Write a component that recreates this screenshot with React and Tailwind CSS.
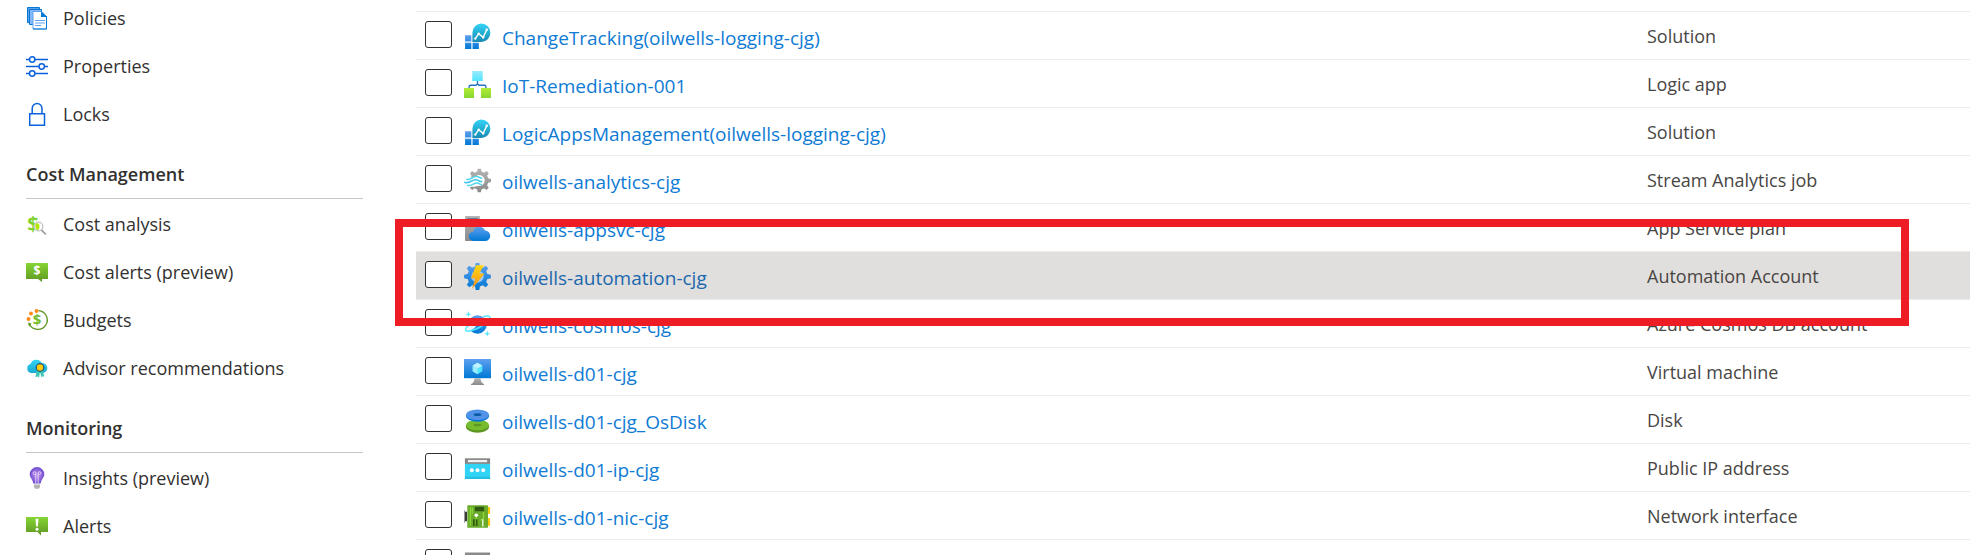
import React from "react";

function gear(cx, cy, outer, inner, teeth) {
  const step = (Math.PI * 2) / teeth;
  const pt = (r, a) => `${(cx + r * Math.sin(a)).toFixed(2)} ${(cy - r * Math.cos(a)).toFixed(2)}`;
  let d = "";
  for (let i = 0; i < teeth; i++) {
    const a = i * step;
    d += `${i ? "L" : "M"}${pt(inner, a - step * 0.3)}L${pt(outer, a - step * 0.17)}L${pt(outer, a + step * 0.17)}L${pt(inner, a + step * 0.3)}`;
  }
  return d + "Z";
}

function Gradients() {
  const list = [
    ["blue", "#5ea0ef", "#0078d4"],
    ["cyan", "#32d4f5", "#198ab3"],
    ["lime", "#b4ec36", "#86d633"],
    ["green", "#86d633", "#5e9624"],
    ["sky", "#9cebff", "#50e6ff"],
    ["grey", "#b3b3b3", "#8a8a8a"],
    ["bolt", "#ffd70f", "#f78d1e"],
    ["advisor", "#32d4f5", "#1ba9cf"],
  ];
  return (
    <svg className="h-0 w-0 shrink-0" aria-hidden="true">
      <defs>
        {list.map(([id, a, b]) => (
          <linearGradient key={id} id={id} x1="0" y1="0" x2="0" y2="1">
            <stop offset="0" stopColor={a} />
            <stop offset="1" stopColor={b} />
          </linearGradient>
        ))}
        <radialGradient id="bulb">
          <stop offset="0" stopColor="#c69aeb" />
          <stop offset="1" stopColor="#6f4bd2" />
        </radialGradient>
      </defs>
    </svg>
  );
}

const Dollar = ({ x, y, size, fill }) => (
  <text x={x} y={y} fontSize={size} fill={fill} textAnchor="middle" fontWeight="700" fontFamily="Open Sans, sans-serif">$</text>
);

/* Sidebar drawings, 22 x 22 grid */
const menuIcons = {
  policies: (
    <>
      <path d="M1.5.5h12v15h-12z" fill="#5ea0ef" stroke="#0078d4" />
      <path d="M3.5 2.5h12v15h-12z" fill="#83b9f9" stroke="#0078d4" />
      <path d="M7 4.5h9l4.500 5v12.500H7z" fill="#fff" stroke="#5ea0ef" />
      <path d="M15 4.200 21 10h-6z" fill="#0078d4" />
      <path d="M20.500 9v13H7" fill="none" stroke="#0078d4" />
      <path d="M9 13.500h10M9 16h10M9 18.500h6" stroke="#5ea0ef" strokeWidth="1.200" />
    </>
  ),
  properties: (
    <g stroke="#0b62dc" strokeWidth="1.500" fill="#fff">
      <path d="M0 4.500h22M0 11.500h22M0 18.500h22" />
      <circle cx="6.200" cy="4.500" r="2.700" />
      <circle cx="15.700" cy="11.500" r="2.700" />
      <circle cx="6.200" cy="18.500" r="2.700" />
    </g>
  ),
  locks: (
    <g stroke="#0b62dc" strokeWidth="1.500" fill="none">
      <path d="M3.700 10.700h14.800v11.500H3.700z" fill="#fff" />
      <path d="M6.200 10.700V5.500a4.900 4.900 0 0 1 9.800 0v5.200" />
    </g>
  ),
  cost: (
    <>
      <Dollar x="7" y="18" size="20" fill="#7fd32f" />
      <circle cx="12.500" cy="13.500" r="4.300" fill="#fff" stroke="#c4c4c4" strokeWidth="1.300" />
      <path d="M9.500 10.500q4-1.500 4 3t-3 3q-2-3-1-6z" fill="#b4e60e" />
      <path d="m15.500 17 4.300 4.500" stroke="#999" strokeWidth="1.800" />
    </>
  ),
  costAlert: (
    <>
      <path d="M.5 2h21q.5 0 .5.500v15q0 .5-.5.500H16v3l-4-3H.5q-.5 0-.5-.5v-15Q0 2 .5 2z" fill="url(#green)" />
      <Dollar x="11" y="14" size="12" fill="#fff" />
    </>
  ),
  budgets: (
    <>
      <path d="M12.500 1.600a9.400 9.400 0 1 1-9 13.700" fill="none" stroke="#5e9624" strokeWidth="1.300" />
      <path d="m2 13.500 3.500 1-2.500 3.300z" fill="#5e9624" />
      <circle cx="10.500" cy="2" r="2" fill="#ff8c1a" />
      <circle cx="5" cy="4.500" r="2" fill="#ff8c1a" />
      <circle cx="2.500" cy="10" r="2" fill="#ff8c1a" />
      <Dollar x="11" y="16" size="15" fill="#76bc2d" />
    </>
  ),
  advisor: (
    <>
      <path d="M5 16a4.800 4.800 0 0 1-.3-9.300A6 6 0 0 1 15.600 6 5 5 0 0 1 17 16z" fill="url(#advisor)" />
      <path d="M10.500 13.500 9.500 20l2.500-.5 1 1.500 1-6 1.500 5.500 1-1.200 1.700.5-1.200-6z" fill="#3fc8b4" />
      <circle cx="14" cy="10.500" r="3.800" fill="#ffca00" stroke="#1c5180" strokeWidth="1.200" />
    </>
  ),
  insights: (
    <>
      <path d="M11 0a7.300 7.300 0 0 1 7.300 7.300c0 3.500-3 4.900-3.600 9.200H7.300C6.700 12.200 3.700 10.800 3.700 7.300A7.300 7.300 0 0 1 11 0z" fill="url(#bulb)" />
      <path d="M9.800 16V7.500M12.200 16V7.500M9.800 7.500H8.500A1.400 1.400 0 1 1 9.800 6zM12.200 7.500h1.300A1.400 1.400 0 1 0 12.200 6z" fill="none" stroke="#e6d3f8" strokeWidth=".9" />
      <path d="M8 17.500h6v2.500l-1.200 1.700H9.200L8 20z" fill="#b3b3b3" />
    </>
  ),
  alerts: (
    <>
      <path d="M.5 2h21q.5 0 .5.500v14q0 .5-.5.500H15v3.500L11.500 17H.5q-.5 0-.5-.5v-14Q0 2 .5 2z" fill="url(#green)" />
      <path d="M9.500 3.700h3l-.6 7.800h-1.800z" fill="#fff" />
      <circle cx="11" cy="14.200" r="1.500" fill="#fff" />
    </>
  ),
};

/* Resource drawings, 18 x 18 grid */
const resourceIcons = {
  solution: (
    <>
      <path d="M.7 8.200h4.200v4.200H.7zM.7 13.200h4.200v4.200H.7zM5.700 13.200h4.200v4.200H5.700z" fill="url(#blue)" />
      <path d="M5.600 12.600V6.500a6 6.100 0 1 1 6 6.100z" fill="url(#cyan)" />
      <path d="m7.500 10.400 2.300-3.200 3 2.400 2.400-5.200" fill="none" stroke="#fff" strokeWidth=".9" />
      <g fill="#fff"><circle cx="7.500" cy="10.400" r=".8" /><circle cx="9.800" cy="7.200" r=".8" /><circle cx="12.800" cy="9.600" r=".8" /><circle cx="15.200" cy="4.400" r=".8" /></g>
    </>
  ),
  logic: (
    <>
      <path d="M5.500 0h7v6.700h-7z" fill="url(#sky)" />
      <path d="M9 6.700v2.500M3.400 11.300v-.8q0-1 1-1H8L9 8.500l1 1h3.600q1 0 1 1v.8" fill="none" stroke="#2773c4" strokeWidth=".9" />
      <path d="M0 11.300h6.700V18H0zM11.300 11.300H18V18h-6.700z" fill="url(#lime)" />
    </>
  ),
  stream: (
    <>
      <path d={gear(10.2, 9, 7.9, 6.1, 8)} fill="url(#grey)" />
      <circle cx="10.200" cy="9" r="3.600" fill="#fff" />
      <path d="M-1 6.800h7.500L10 5.500v7L7 13.200H-1z" fill="#fff" />
      <g fill="none" strokeWidth="1"><path d="M1.500 8.200c3 1.200 4-2.400 7-1.800 2 .3 2 1.200 3.700 1" stroke="#50d8f0" /><path d="M.2 10.200c3.800 1.500 5-2.200 8-1.700 2 .3 2 1.500 4 1.200" stroke="#32c4e4" /><path d="M2 12.200c3.500 1 4.500-2 7-1.500 1.500.3 1.500 1.200 3 1" stroke="#50d8f0" /></g>
    </>
  ),
  plan: (
    <>
      <path d="M1.200.7h9q.5 0 .5.500v16.100H1.200q-.5 0-.5-.5V1.200q0-.5.5-.5z" fill="url(#grey)" />
      <path d="M2.300 2.300h6.900v1.400H2.300zM2.300 4.900h6.900v1.300H2.300z" fill="#1b4c80" />
      <path d="M6.500 17.300a3.100 3.100 0 0 1-.4-6.200A4.200 4.200 0 0 1 14 10.300a3.500 3.500 0 0 1 0 7z" fill="url(#blue)" />
    </>
  ),
  automation: (
    <>
      <path d={gear(9, 9, 9, 6.8, 8)} fill="url(#blue)" />
      <circle cx="9" cy="9" r="4.100" fill="#9fc8f5" />
      <path d="M8 1.500h5.300L10.200 7h3.500L5.300 17.400 7.500 10.300H4.600z" fill="url(#bolt)" />
    </>
  ),
  cosmos: (
    <>
      <circle cx="9" cy="9" r="6.200" fill="url(#blue)" />
      <path d="M3.500 7.500Q6 5.500 7.500 8T6 12q-2 1.500-3 .3-.8-2.600.5-4.800z" fill="#e6f2ff" />
      <path d="M12.700 3.800C16 2.800 18 3.300 17 5.200c-1.300 2.500-5.500 5.300-9.500 7-3.500 1.500-6.500 1.700-6.500.3 0-1 .8-2 2-3" fill="none" stroke="#50e6ff" strokeWidth="1" />
      <path d="m2.900 0 .5 1.600L5 2.100l-1.600.5-.5 1.600-.5-1.600L.8 2.100l1.600-.5zM15.500 13l.5 1.600 1.600.5-1.600.5-.5 1.600-.5-1.600-1.600-.5 1.600-.5z" fill="#50e6ff" />
    </>
  ),
  vm: (
    <>
      <path d="M0 0h18v12.800H0z" fill="url(#blue)" />
      <path d="m9 2.500 3.200 1.900v3.800L9 10.100 5.800 8.200V4.400z" fill="#50e6ff" />
      <path d="m9 2.500 3.200 1.900L9 6.300 5.800 4.400z" fill="#c3f1ff" />
      <path d="m5.800 4.400 3.200 1.900v3.800L5.800 8.200z" fill="#9cebff" />
      <path d="M7 12.800h4q.2 3 2.300 3.900v.6H4.700v-.6Q6.800 15.800 7 12.800z" fill="url(#grey)" />
    </>
  ),
  disk: (
    <>
      <path d="M1.300 12v1.500a7.700 3.600 0 0 0 15.400 0V12z" fill="#5e9624" />
      <ellipse cx="9" cy="12" rx="7.700" ry="3.500" fill="#76bc2d" />
      <ellipse cx="9" cy="12" rx="2.600" ry=".9" fill="#5e9624" />
      <path d="M1.300 5.200v1a7.700 3.600 0 0 0 15.400 0v-1z" fill="#0078d4" />
      <ellipse cx="9" cy="5.200" rx="7.700" ry="3.500" fill="#5293e8" />
      <ellipse cx="9" cy="5.100" rx="2.600" ry=".9" fill="#0a5aa8" />
    </>
  ),
  ip: (
    <>
      <path d="M.6 5.600h16.800V16H.6z" fill="#32d4f5" />
      <path d="M.6 14.500h16.800V16H.6z" fill="#27bfe0" />
      <path d="M.6 2.200h16.800v3.700H.6z" fill="#858585" />
      <path d="M2.600 3.300h12.800v1.500H2.600z" fill="#f2f2f2" />
      <g fill="#fff"><circle cx="5.200" cy="10.200" r="1.300" /><circle cx="9" cy="10.200" r="1.300" /><circle cx="12.800" cy="10.200" r="1.300" /></g>
    </>
  ),
  nic: (
    <>
      <path d="M.3 5.800H2v6.400H.3z" fill="#3a3a3a" />
      <path d="M0 4.800h.6v8.400H0z" fill="#999" />
      <path d="M15.800 2.700h1.600v4.500h-1.600zM15.800 10.200h1.600v5h-1.600z" fill="#ffca00" />
      <rect x="2.200" y="1.500" width="13.800" height="15" rx=".4" fill="#6aab2b" />
      <path d="M4.200 3v12M5.500 3v4.500M8.200 8v6M13 6v4.500l-2 1" stroke="#8fdc35" strokeWidth=".8" fill="none" />
      <path d="M7.200 2.500h6.200v3H7.200zM6 10.800h1.100v4.600H6zM7.900 10.800H9v4.600H7.900z" fill="#2f5a10" />
      <circle cx="8.200" cy="8.200" r="1.200" fill="#fff" />
      <path d="M12 10.800h1v4.800h-1z" fill="#e8f5d8" />
    </>
  ),
  storage: <path d="M.6 1h16.800v4H.6z" fill="#8a8a8a" />,
};

const sections = [
  { title: null, items: [["Policies", "policies"], ["Properties", "properties"], ["Locks", "locks"]] },
  {
    title: "Cost Management",
    items: [["Cost analysis", "cost"], ["Cost alerts (preview)", "costAlert"], ["Budgets", "budgets"], ["Advisor recommendations", "advisor"]],
  },
  { title: "Monitoring", items: [["Insights (preview)", "insights"], ["Alerts", "alerts"]] },
];

const resources = [
  { name: "ChangeTracking(oilwells-logging-cjg)", type: "Solution", icon: "solution" },
  { name: "IoT-Remediation-001", type: "Logic app", icon: "logic" },
  { name: "LogicAppsManagement(oilwells-logging-cjg)", type: "Solution", icon: "solution" },
  { name: "oilwells-analytics-cjg", type: "Stream Analytics job", icon: "stream" },
  { name: "oilwells-appsvc-cjg", type: "App Service plan", icon: "plan" },
  { name: "oilwells-automation-cjg", type: "Automation Account", icon: "automation", active: true },
  { name: "oilwells-cosmos-cjg", type: "Azure Cosmos DB account", icon: "cosmos" },
  { name: "oilwells-d01-cjg", type: "Virtual machine", icon: "vm" },
  { name: "oilwells-d01-cjg_OsDisk", type: "Disk", icon: "disk" },
  { name: "oilwells-d01-ip-cjg", type: "Public IP address", icon: "ip" },
  { name: "oilwells-d01-nic-cjg", type: "Network interface", icon: "nic" },
  { name: "", type: "", icon: "storage" },
];

function Sidebar() {
  return (
    <nav className="-mt-[7px] w-[363px] shrink-0 pl-[26px]">
      {sections.map((section) => (
        <section key={section.items[0][0]}>
          {section.title && (
            <h2 className="flex h-[62px] items-center border-b border-[#c8c6c4] pt-3 font-semibold text-[#323130]">{section.title}</h2>
          )}
          <ul>
            {section.items.map(([label, icon]) => (
              <li key={label}>
                <a href="#" className="flex h-12 items-center gap-[15px] pt-[2px] text-[#323130]">
                  <svg viewBox="0 0 22 22" className="size-[22px] shrink-0 overflow-visible" aria-hidden="true">{menuIcons[icon]}</svg>
                  {label}
                </a>
              </li>
            ))}
          </ul>
        </section>
      ))}
    </nav>
  );
}

function ResourceRow({ name, type, icon, active }) {
  return (
    <tr className={active ? "h-12 border-b border-[#edebe9] bg-[#e1dfdd]" : "h-12 border-b border-[#edebe9]"}>
      <td className="p-0">
        <div className="flex h-[47px] items-center pl-[9px]">
          <input
            type="checkbox"
            aria-label="Select resource"
            className="mb-[2px] size-[27px] shrink-0 appearance-none rounded-[3px] border border-[#323130] bg-white"
          />
          <svg viewBox="0 0 18 18" className="ml-3 mt-[2px] size-[27px] shrink-0" aria-hidden="true">{resourceIcons[icon]}</svg>
          {name && (
            <a href="#" className={active ? "ml-[11px] pt-1 text-[19px] text-[#1a67ae]" : "ml-[11px] pt-1 text-[19px] text-[#0f7bd4]"}>{name}</a>
          )}
        </div>
      </td>
      <td className="p-0 text-[#484644]">{type}</td>
    </tr>
  );
}

export default function App() {
  return (
    <div className="flex h-screen overflow-hidden bg-white font-['Open_Sans',sans-serif] text-[18px] leading-6">
      <Gradients />
      <Sidebar />
      <main className="relative ml-[53px] min-w-0 flex-1 pt-[11px]">
        <table className="w-full table-fixed border-collapse border-t border-[#edebe9]">
          <colgroup>
            <col />
            <col className="w-[323px]" />
          </colgroup>
          <tbody>
            {resources.map((r, i) => (
              <ResourceRow key={i} {...r} />
            ))}
          </tbody>
        </table>
        <div className="pointer-events-none absolute -left-[21px] right-[61px] top-[219px] h-[107px] border-8 border-[#ee1c24]" />
      </main>
    </div>
  );
}
